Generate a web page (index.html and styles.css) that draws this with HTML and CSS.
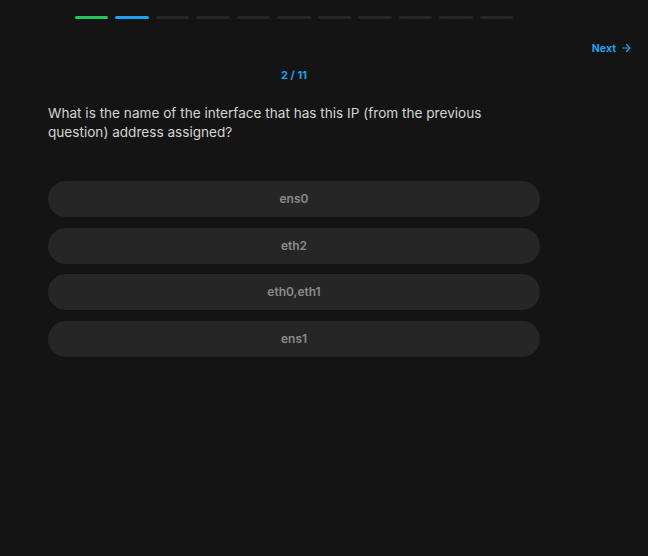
FILE: index.html
```html
<!DOCTYPE html>
<html>
<head>
<meta charset="utf-8">
<link rel="stylesheet" href="styles.css">
</head>
<body>
<div class="page">
  <div class="progress">
    <span class="seg done"></span>
    <span class="seg current"></span>
    <span class="seg"></span>
    <span class="seg"></span>
    <span class="seg"></span>
    <span class="seg"></span>
    <span class="seg"></span>
    <span class="seg"></span>
    <span class="seg"></span>
    <span class="seg"></span>
    <span class="seg"></span>
  </div>
  <div class="topbar">
    <a class="next">Next
      <svg width="12" height="12" viewBox="0 0 24 24" fill="none" stroke="currentColor" stroke-width="2.3" stroke-linecap="round" stroke-linejoin="round"><path d="M5 12h14"/><path d="M13 5l7 7-7 7"/></svg>
    </a>
  </div>
  <div class="main">
    <div class="counter">2 / 11</div>
    <p class="question">What is the name of the interface that has this IP (from the previous question) address assigned?</p>
    <div class="options">
      <button class="opt">ens0</button>
      <button class="opt">eth2</button>
      <button class="opt">eth0,eth1</button>
      <button class="opt">ens1</button>
    </div>
  </div>
</div>
</body>
</html>
```
FILE: styles.css
```css
html, body {
  margin: 0;
  padding: 0;
  background: #141414;
  font-family: Inter, "Noto Sans", sans-serif;
}
.page {
  width: 648px;
  height: 556px;
}
.progress {
  display: flex;
  gap: 7px;
  margin: 0 0 0 75px;
  width: 438px;
  padding-top: 16px;
}
.seg {
  flex: 1;
  height: 3px;
  border-radius: 2px;
  background: #262626;
}
.seg.done { background: #22c55e; }
.seg.current { background: #1da1f2; }
.topbar {
  display: flex;
  justify-content: flex-end;
  padding: 20px 16px 0 0;
  height: 18px;
}
.next {
  display: flex;
  align-items: center;
  gap: 4px;
  color: #1da1f2;
  font-size: 10.5px;
  font-weight: 700;
}
.main {
  width: 492px;
  margin-left: 48px;
}
.counter {
  text-align: center;
  color: #1da1f2;
  font-size: 11px;
  font-weight: 700;
  margin-top: 11px;
  line-height: 14px;
}
.question {
  margin: 22px 0 0;
  color: #d4d4d4;
  font-size: 13.6px;
  line-height: 19px;
}
.options {
  display: flex;
  flex-direction: column;
  gap: 10.5px;
  margin-top: 39px;
}
.opt {
  height: 36px;
  border: none;
  border-radius: 18px;
  background: #262626;
  color: #8b8b8b;
  font-family: Inter, "Noto Sans", sans-serif;
  font-size: 12px;
  font-weight: 600;
  padding: 0 0 1px;
}
```
